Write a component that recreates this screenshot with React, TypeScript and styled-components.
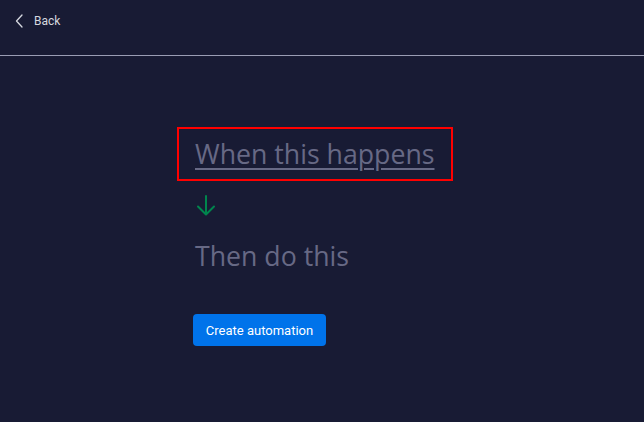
import React from "react";
import styled, { createGlobalStyle } from "styled-components";

const Global = createGlobalStyle`
  html, body { margin: 0; padding: 0; background: #181b34; }
  body { font-family: Roboto, "Liberation Sans", sans-serif; }
`;

const Page = styled.div`
  width: 644px;
  height: 422px;
  background: #181b34;
  display: flex;
  flex-direction: column;
  overflow: hidden;
`;

const Header = styled.header`
  height: 56px;
  border-bottom: 1px solid #9a9db4;
  display: flex;
  align-items: flex-start;
  padding: 13px 0 0 14px;
  box-sizing: border-box;
`;

const BackButton = styled.button`
  display: flex;
  align-items: center;
  gap: 6px;
  background: none;
  border: none;
  padding: 0;
  color: #d5d8df;
  font-family: Roboto, "Liberation Sans", sans-serif;
  font-size: 12px;
  cursor: pointer;
`;

const Main = styled.main`
  padding: 71px 0 0 177px;
  display: flex;
  flex-direction: column;
  align-items: flex-start;
`;

const TriggerBox = styled.div`
  border: 2px solid #ff0000;
  padding: 8px 16px;
  width: 276px;
  box-sizing: border-box;
`;

const Sentence = styled.h2<{ $underline?: boolean }>`
  margin: 0;
  font-family: "Open Sans", "Liberation Sans", sans-serif;
  font-weight: 400;
  font-size: 26.7px;
  line-height: 34px;
  color: #676985;
  text-decoration: ${(p) => (p.$underline ? "underline" : "none")};
  text-decoration-thickness: 2px;
  text-underline-offset: 4px;
  white-space: nowrap;
`;

const ArrowWrap = styled.div`
  margin: 14px 0 0 19px;
  height: 22px;
  color: #00854d;
`;

const ActionLine = styled.div`
  margin: 22px 0 0 18px;
`;

const PrimaryButton = styled.button`
  margin: 41px 0 0 16px;
  height: 32px;
  width: 133px;
  background: #0073ea;
  color: #ffffff;
  border: none;
  border-radius: 4px;
  font-family: Roboto, "Liberation Sans", sans-serif;
  font-size: 13px;
  padding: 0;
  cursor: pointer;
`;

export default function App() {
  return (
    <Page>
      <Global />
      <Header>
        <BackButton>
          <svg width="14" height="16" viewBox="0 0 14 16" fill="none">
            <path d="M8 2 L2.5 8 L8 14" stroke="#d5d8df" strokeWidth="1.3" strokeLinecap="round" strokeLinejoin="round" />
          </svg>
          Back
        </BackButton>
      </Header>
      <Main>
        <TriggerBox>
          <Sentence $underline>When this happens</Sentence>
        </TriggerBox>
        <ArrowWrap>
          <svg width="20" height="21" viewBox="0 0 20 21" fill="none">
            <path d="M10 1 V19 M2 11.5 L10 19.5 L18 11.5" stroke="currentColor" strokeWidth="2" strokeLinecap="round" strokeLinejoin="round" />
          </svg>
        </ArrowWrap>
        <ActionLine>
          <Sentence>Then do this</Sentence>
        </ActionLine>
        <PrimaryButton>Create automation</PrimaryButton>
      </Main>
    </Page>
  );
}
